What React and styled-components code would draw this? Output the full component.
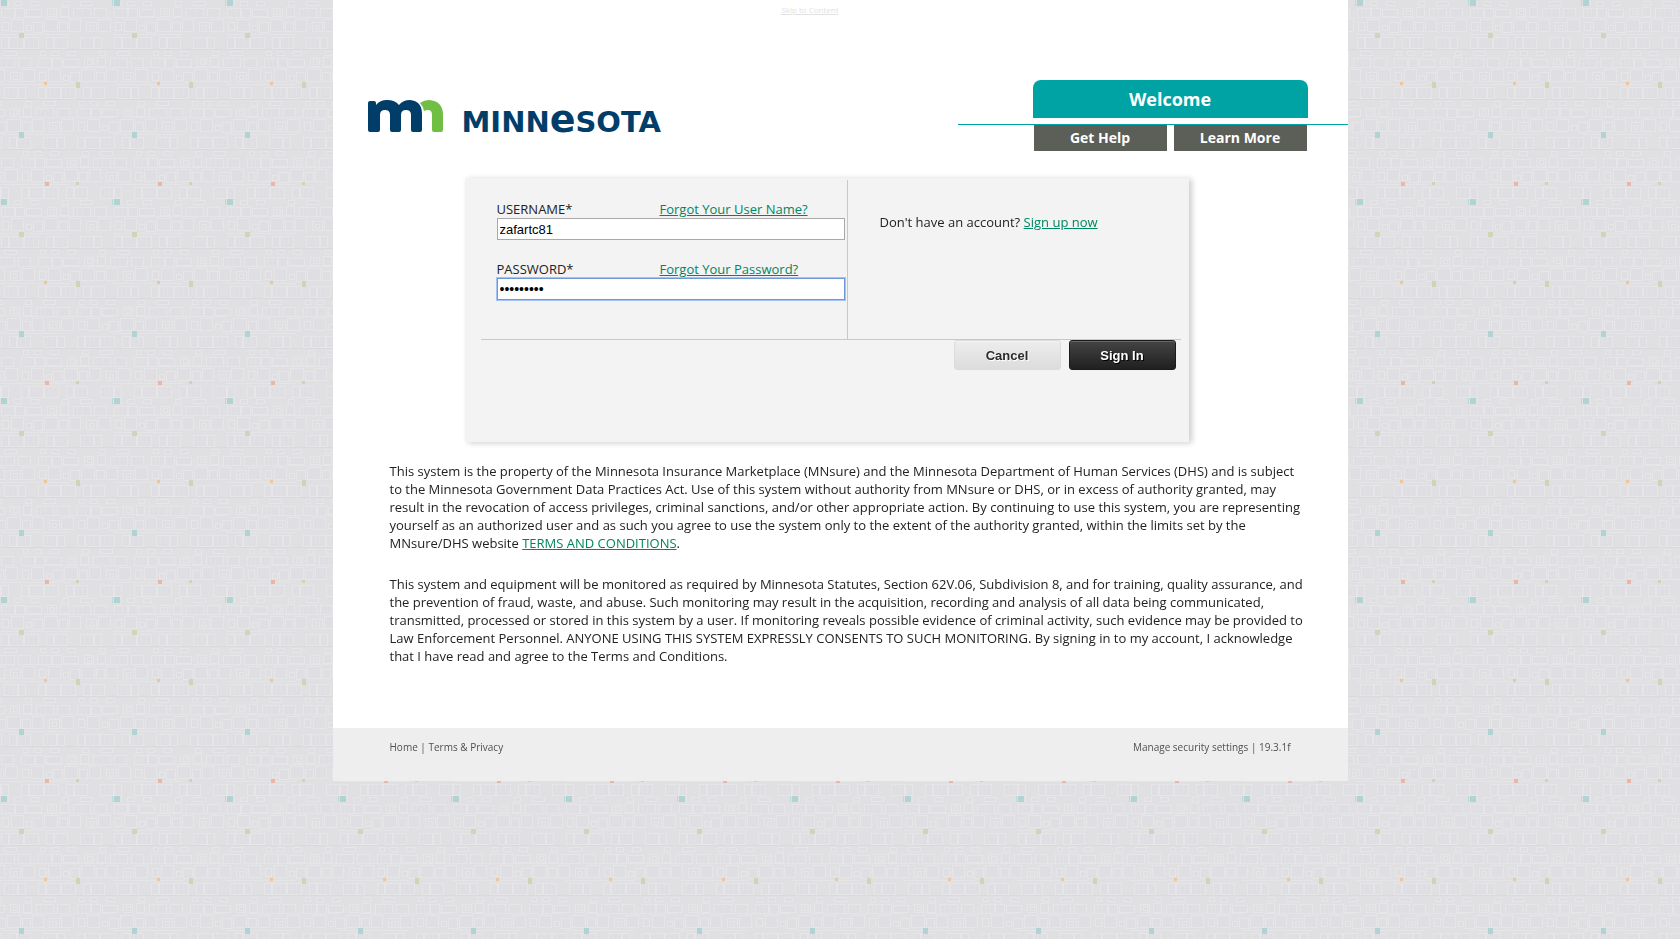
import React from 'react';
import styled, { createGlobalStyle, css } from 'styled-components';

/* Decorative wallpaper: a 113 x 199 tile of faint outlined squares and colour chips. */
const bands = [
  { y: 0, shift: 0 },
  { y: 50, shift: 37 },
  { y: 100, shift: 76 },
  { y: 150, shift: 20 },
];
const boxes = [
  [1, 8, 13, 9], [15, 8, 9, 9], [26, 9, 15, 7], [47, 8, 9, 8], [50, 10, 4, 4], [60, 7, 8, 9], [73, 8, 17, 9], [94, 8, 12, 9],
  [2, 22, 6, 8], [11, 19, 12, 12], [26, 25, 5, 5], [33, 22, 9, 10], [44, 19, 13, 12], [59, 22, 8, 9], [69, 19, 11, 12], [86, 22, 10, 9], [89, 25, 4, 4], [98, 19, 12, 12],
  [1, 37, 7, 11], [9, 37, 14, 11], [24, 37, 14, 11], [46, 37, 7, 11], [54, 37, 13, 11], [80, 37, 13, 11], [94, 37, 7, 11],
  [3, 1, 5, 4], [14, 1, 7, 4], [30, 1, 8, 4], [62, 1, 6, 4], [80, 1, 12, 4],
];
const hatch = [[13, 37], [17, 37], [28, 37], [33, 37], [57, 37], [62, 37], [84, 37], [89, 37], [5, 8], [9, 8], [77, 8], [82, 8]];
const chips = [
  [1, 0, 6, 6, '#b0d3d4'], [112, 0, 1, 6, '#bcd8d9'], [19, 33, 5, 5, '#cfd5b9'],
  [44, 82, 3, 3, '#efc59c'], [76, 82, 4, 6, '#ced5b6'], [19, 132, 5, 6, '#b0d3d4'],
  [45, 182, 4, 4, '#ecb5a8'], [76, 182, 3, 3, '#ced5b6'],
];
const bandArt = bands.map(({ y, shift }) => {
  const squares = [0, 113].map((wrap) =>
    boxes.map(([bx, by, w, h]) => `<rect x='${bx + shift - wrap + 0.5}' y='${by + y + 0.5}' width='${w}' height='${h}'/>`).join('') +
    hatch.map(([hx, hy]) => `<path d='M${hx + shift - wrap + 0.5} ${hy + y}v9' stroke-opacity='.4'/>`).join('')
  ).join('');
  return `<g fill='#dfdee3' stroke='#e6e6e8'>${squares}</g><path d='M0 ${y + 49.5}h113' stroke='#dadadd'/><path d='M0 ${y + 34.5}h70M20 ${y + 17.5}h93' stroke='#e5e5e8'/>`;
}).join('');
const chipArt = chips.map(([x, y, w, h, c]) => `<rect x='${x}' y='${y}' width='${w}' height='${h}' fill='${c}'/>`).join('');
const tile = encodeURIComponent(
  `<svg xmlns='http://www.w3.org/2000/svg' width='113' height='199'><rect width='113' height='199' fill='#e0e0e3'/>${bandArt}${chipArt}</svg>`
);

const GlobalStyle = createGlobalStyle`
  *, *::before, *::after { box-sizing: border-box; }
  body {
    margin: 0;
    min-height: 100vh;
    background: #e0e0e3 url("data:image/svg+xml,${tile}");
    color: #222;
    font: 13px/18px "Open Sans", "Noto Sans", sans-serif;
  }
  p { margin: 0; }
`;

const Page = styled.div`
  width: 100%;
  max-width: 1015px;
  margin: 0 auto;
  background: #fff;
`;

const SkipLink = styled.a`
  display: block;
  width: max-content;
  margin: 0 auto;
  padding-right: 60px;
  color: #e2e2e2;
  font-size: 8px;
  line-height: 20px;
`;

const Header = styled.header`
  display: flex;
  justify-content: space-between;
  padding: 60px 0 0 35px;
`;

const Brand = styled.a`
  display: flex;
  align-items: baseline;
  gap: 18px;
  height: 53px;
  padding-top: 20px;
  color: #003e69;
  text-decoration: none;
`;

const Mark = styled.svg`
  display: block;
  width: 76px;
  height: 32px;
`;

const Wordmark = styled.span`
  font: 700 29px/20px "DejaVu Sans", sans-serif;
  white-space: nowrap;
`;

const TallE = styled.span`
  font-size: 38px;
`;

const HeaderNav = styled.nav`
  width: 390px;
`;

const WelcomeTab = styled.div`
  width: 275px;
  margin-left: 75px;
  border-radius: 8px 8px 0 0;
  background: #00a3a3;
  color: #fff;
  font-size: 18px;
  font-weight: 700;
  line-height: 38px;
  text-align: center;
`;

const NavRow = styled.div`
  display: flex;
  gap: 7px;
  margin-top: 6px;
  padding-left: 76px;
  border-top: 1px solid #00a3a3;
`;

const NavLink = styled.a`
  width: 133px;
  background: #5c5e58;
  color: #fff;
  font-size: 14px;
  font-weight: 700;
  line-height: 26px;
  text-align: center;
  text-decoration: none;
`;

const Panel = styled.form`
  max-width: 724px;
  min-height: 264px;
  margin: 27px 159px 0 132px;
  padding: 2px 8px 0 16px;
  background: #f3f3f3;
  box-shadow: 3px 1px 6px rgba(0, 0, 0, 0.2);
`;

const Columns = styled.div`
  display: grid;
  grid-template-columns: 367px 1fr;
  border-bottom: 1px solid #c8c8c8;
`;

const Fields = styled.div`
  display: flex;
  flex-direction: column;
  gap: 20px;
  padding: 20px 2px 39px 16px;
  border-right: 1px solid #c8c8c8;
`;

const Field = styled.div`
  display: grid;
  grid-template-columns: 163px 1fr;
`;

const TextLink = styled.a`
  color: #00865f;
`;

const TextInput = styled.input`
  grid-column: 1 / -1;
  width: 100%;
  height: 22px;
  padding: 0 2px;
  border: 1px solid #a9a9a9;
  border-radius: 0;
  background: #fff;
  color: #000;
  font: 13px "Liberation Sans", Arial, sans-serif;
  outline: none;
  ${(p) => p.$active && css`
    border-color: #6f98dc;
    box-shadow: 0 0 0 1px #a3c2f5;
    font-size: 14px;
  `}
`;

const SignUp = styled.p`
  padding: 33px 0 0 32px;
`;

const Actions = styled.div`
  display: flex;
  justify-content: flex-end;
  gap: 8px;
  padding-right: 5px;
`;

const Button = styled.button`
  width: 107px;
  height: 30px;
  padding: 0;
  border: 1px solid #dcdcdc;
  border-radius: 3px;
  background: linear-gradient(#ededed, #dcdcdc);
  box-shadow: inset 0 1px 0 #f4f4f4;
  color: #2b2b2b;
  font: bold 13px "Liberation Sans", Arial, sans-serif;
  text-shadow: 1px 1px 0 #fff;
  ${(p) => p.$primary && css`
    border-color: #1b1b1b;
    background: linear-gradient(#444, #202020);
    box-shadow: inset 0 1px 0 #666;
    color: #fff;
    text-shadow: 1px 1px 0 #000;
  `}
`;

const Legal = styled.section`
  display: flex;
  flex-direction: column;
  gap: 23px;
  padding: 20px 40px 63px 57px;
`;

const Footer = styled.footer`
  display: flex;
  justify-content: space-between;
  height: 53px;
  padding: 10px 57px 0;
  background: #eee;
  color: #505050;
  font-size: 10px;
`;

const FooterLink = styled.a`
  color: inherit;
  text-decoration: none;
`;

export default function App() {
  return (
    <>
      <GlobalStyle />
      <Page>
        <SkipLink href="#content">Skip to Content</SkipLink>
        <Header>
          <Brand href="#home" aria-label="Minnesota">
            <Mark viewBox="0 0 76 32" aria-hidden="true">
              <path
                fill="#003e69"
                d="M2 1H6Q8 1 8 3V5Q12 0 19 0Q27 0 31 5Q35 0 42 0Q54 1 54 14V30Q54 32 52 32H45Q43 32 43 30V15Q43 10 38 10Q33 10 33 15V30Q33 32 31 32H24Q22 32 22 30V15Q22 10 17 10Q12 10 12 15V30Q12 32 10 32H2Q0 32 0 30V3Q0 1 2 1Z"
              />
              <path
                fill="#70bf44"
                d="M52 3Q56 0 61 0Q75 1 75 15V30Q75 32 73 32H66Q64 32 64 30V15Q64 10 60 10Q58 10 56 11Q55 6 52 3Z"
              />
            </Mark>
            <Wordmark>
              MINN<TallE>e</TallE>SOTA
            </Wordmark>
          </Brand>
          <HeaderNav>
            <WelcomeTab>Welcome</WelcomeTab>
            <NavRow>
              <NavLink href="#help">Get Help</NavLink>
              <NavLink href="#learn">Learn More</NavLink>
            </NavRow>
          </HeaderNav>
        </Header>

        <main id="content">
          <Panel onSubmit={(e) => e.preventDefault()}>
            <Columns>
              <Fields>
                <Field>
                  <label htmlFor="username">USERNAME*</label>
                  <span><TextLink href="#forgot-name">Forgot Your User Name?</TextLink></span>
                  <TextInput id="username" defaultValue="zafartc81" />
                </Field>
                <Field>
                  <label htmlFor="password">PASSWORD*</label>
                  <span><TextLink href="#forgot-password">Forgot Your Password?</TextLink></span>
                  <TextInput id="password" type="password" defaultValue="passwords" $active autoFocus />
                </Field>
              </Fields>
              <SignUp>
                Don't have an account? <TextLink href="#signup">Sign up now</TextLink>
              </SignUp>
            </Columns>
            <Actions>
              <Button type="button">Cancel</Button>
              <Button type="submit" $primary>Sign In</Button>
            </Actions>
          </Panel>

          <Legal>
            <p>
              This system is the property of the Minnesota Insurance Marketplace (MNsure) and the Minnesota Department of
              Human Services (DHS) and is subject
              <br />
              to the Minnesota Government Data Practices Act. Use of this system without authority from MNsure or DHS, or
              in excess of authority granted, may
              <br />
              result in the revocation of access privileges, criminal sanctions, and/or other appropriate action. By
              continuing to use this system, you are representing
              <br />
              yourself as an authorized user and as such you agree to use the system only to the extent of the authority
              granted, within the limits set by the
              <br />
              MNsure/DHS website <TextLink href="#terms">TERMS AND CONDITIONS</TextLink>.
            </p>
            <p>
              This system and equipment will be monitored as required by Minnesota Statutes, Section 62V.06, Subdivision
              8, and for training, quality assurance, and
              <br />
              the prevention of fraud, waste, and abuse. Such monitoring may result in the acquisition, recording and
              analysis of all data being communicated,
              <br />
              transmitted, processed or stored in this system by a user. If monitoring reveals possible evidence of
              criminal activity, such evidence may be provided to
              <br />
              Law Enforcement Personnel. ANYONE USING THIS SYSTEM EXPRESSLY CONSENTS TO SUCH MONITORING. By signing in to
              my account, I acknowledge
              <br />
              that I have read and agree to the Terms and Conditions.
            </p>
          </Legal>
        </main>

        <Footer>
          <span>
            <FooterLink href="#home">Home</FooterLink> | <FooterLink href="#privacy">Terms &amp; Privacy</FooterLink>
          </span>
          <span>
            <FooterLink href="#security">Manage security settings</FooterLink> | 19.3.1f
          </span>
        </Footer>
      </Page>
    </>
  );
}
